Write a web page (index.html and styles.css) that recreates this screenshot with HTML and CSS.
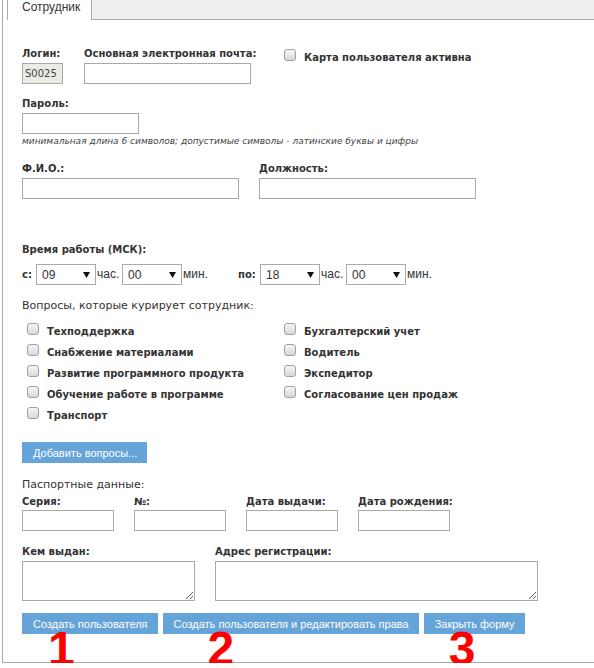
FILE: index.html
```html
<!DOCTYPE html>
<html lang="ru">
<head>
<meta charset="utf-8">
<title>Сотрудник</title>
<link rel="stylesheet" href="styles.css">
</head>
<body>
<div class="wrap">
  <div class="tabs"><div class="tab">Сотрудник</div></div>
  <form class="form">
    <div class="row">
      <div class="field f-login"><label class="lbl">Логин:</label><input class="inp inp-login" value="S0025" disabled></div>
      <div class="field f-email"><label class="lbl">Основная электронная почта:</label><input class="inp inp-email"></div>
      <label class="check"><input type="checkbox" class="cb"><span>Карта пользователя активна</span></label>
    </div>

    <div class="field f-pass"><label class="lbl">Пароль:</label><input class="inp inp-pass" type="password"></div>
    <div class="hint">минимальная длина 6 символов; допустимые символы - латинские буквы и цифры</div>

    <div class="row r-fio">
      <div class="field f-fio"><label class="lbl">Ф.И.О.:</label><input class="inp inp-wide"></div>
      <div class="field"><label class="lbl">Должность:</label><input class="inp inp-wide"></div>
    </div>

    <div class="lbl time-title">Время работы (МСК):</div>
    <div class="time-row">
      <div class="tgroup tg1">
        <span class="lbl tl tl-from">с:</span>
        <span class="sel"><select><option>09</option></select><svg viewBox="0 0 7 6"><path d="M0 0H7L3.5 6Z"/></svg></span>
        <span class="unit u-h">час.</span>
        <span class="sel"><select><option>00</option></select><svg viewBox="0 0 7 6"><path d="M0 0H7L3.5 6Z"/></svg></span>
        <span class="unit u-m">мин.</span>
      </div>
      <div class="tgroup">
        <span class="lbl tl tl-to">по:</span>
        <span class="sel"><select><option>18</option></select><svg viewBox="0 0 7 6"><path d="M0 0H7L3.5 6Z"/></svg></span>
        <span class="unit u-h">час.</span>
        <span class="sel"><select><option>00</option></select><svg viewBox="0 0 7 6"><path d="M0 0H7L3.5 6Z"/></svg></span>
        <span class="unit u-m">мин.</span>
      </div>
    </div>

    <div class="q-title">Вопросы, которые курирует сотрудник:</div>
    <div class="questions">
      <div class="qcol qcol-l">
        <label class="check"><input type="checkbox" class="cb"><span>Техподдержка</span></label>
        <label class="check"><input type="checkbox" class="cb"><span>Снабжение материалами</span></label>
        <label class="check"><input type="checkbox" class="cb"><span>Развитие программного продукта</span></label>
        <label class="check"><input type="checkbox" class="cb"><span>Обучение работе в программе</span></label>
        <label class="check"><input type="checkbox" class="cb"><span>Транспорт</span></label>
      </div>
      <div class="qcol">
        <label class="check"><input type="checkbox" class="cb"><span>Бухгалтерский учет</span></label>
        <label class="check"><input type="checkbox" class="cb"><span>Водитель</span></label>
        <label class="check"><input type="checkbox" class="cb"><span>Экспедитор</span></label>
        <label class="check"><input type="checkbox" class="cb"><span>Согласование цен продаж</span></label>
      </div>
    </div>

    <button type="button" class="btn add">Добавить вопросы...</button>

    <div class="pass-title">Паспортные данные:</div>
    <div class="row pass-row">
      <div class="field f-pp"><label class="lbl">Серия:</label><input class="inp inp-short"></div>
      <div class="field f-pp"><label class="lbl">№:</label><input class="inp inp-short"></div>
      <div class="field f-pp"><label class="lbl">Дата выдачи:</label><input class="inp inp-short"></div>
      <div class="field f-pp"><label class="lbl">Дата рождения:</label><input class="inp inp-short"></div>
    </div>

    <div class="row r-issued">
      <div class="field f-issued"><label class="lbl">Кем выдан:</label><textarea class="ta ta-1"></textarea></div>
      <div class="field"><label class="lbl">Адрес регистрации:</label><textarea class="ta ta-2"></textarea></div>
    </div>

    <div class="actions">
      <div class="act"><button type="button" class="btn">Создать пользователя</button><span class="mark m1">1</span></div>
      <div class="act"><button type="button" class="btn">Создать пользователя и редактировать права</button><span class="mark m2">2</span></div>
      <div class="act"><button type="button" class="btn">Закрыть форму</button><span class="mark m3">3</span></div>
    </div>
  </form>
</div>
</body>
</html>
```

FILE: styles.css
```css
* { box-sizing: border-box; }
html, body { margin: 0; padding: 0; background: #fff; }
body { font-family: "DejaVu Sans", Verdana, sans-serif; color: #333; }

.wrap {
  margin-left: 2px;
  border-left: 1px solid #aaa;
  border-bottom: 1px solid #aaa;
}

.tabs {
  margin-left: 4px;
  height: 20px;
  display: flex;
  align-items: flex-start;
  background: #efefef;
  border-left: 1px solid #aaa;
  border-bottom: 1px solid #aaa;
}
.tab {
  height: 20px;
  padding: 0 11px 0 14px;
  background: #fff;
  border-right: 1px solid #aaa;
  font: 12px/15px "Liberation Sans", Arial, sans-serif;
  color: #333;
}

.form { padding: 27px 0 28px 19px; }

.lbl {
  display: block;
  font: bold 10px/14px "DejaVu Sans", Verdana, sans-serif;
  color: #333;
}

.row { display: flex; align-items: flex-start; }
.field { display: flex; flex-direction: column; gap: 2px; }
.f-login { width: 62px; }
.f-email { width: 200px; }
.f-pass { margin-top: 13px; }
.f-fio { width: 237px; }

.inp {
  display: block;
  height: 21px;
  margin: 0;
  padding: 0 2px;
  border: 1px solid #a9a9a9;
  border-radius: 0;
  background: #fff;
  font: 10px "DejaVu Sans", Verdana, sans-serif;
  color: #444;
  outline: none;
}
.inp-login { width: 41px; background: #ebebe4; }
.inp-email { width: 167px; }
.inp-pass { width: 117px; }
.inp-wide { width: 217px; }
.inp-short { width: 92px; }

.hint {
  margin-top: 1px;
  font: italic 9px/12px "DejaVu Sans", Verdana, sans-serif;
  color: #444;
}

.r-fio { margin-top: 15px; }

.time-title { margin-top: 44px; }
.time-row { margin-top: 7px; display: flex; align-items: center; height: 21px; }
.tgroup { display: flex; align-items: center; }
.tg1 { width: 216px; }
.tl-from { width: 14px; }
.tl-to { width: 22px; }
.sel { position: relative; display: block; width: 60px; height: 21px; }
.sel select {
  -webkit-appearance: none;
  appearance: none;
  display: block;
  width: 100%;
  height: 100%;
  margin: 0;
  padding: 0 0 0 5px;
  border: 1px solid #a9a9a9;
  border-radius: 0;
  background: #fff;
  font: 12px "Liberation Sans", Arial, sans-serif;
  color: #333;
  outline: none;
}
.sel svg {
  position: absolute;
  right: 6px;
  top: 8px;
  width: 7px;
  height: 6px;
  fill: #111;
  pointer-events: none;
}
.unit { font: 12px/21px "Liberation Sans", Arial, sans-serif; color: #333; }
.u-h { width: 26px; padding-left: 1px; }
.u-m { padding-left: 1px; }

.q-title, .pass-title {
  font: 11px/14px "DejaVu Sans", Verdana, sans-serif;
  color: #333;
}
.q-title { margin-top: 14px; }

.questions { margin-top: 8px; display: flex; padding-left: 5px; }
.qcol { display: flex; flex-direction: column; }
.qcol-l { width: 257px; }

.check {
  display: flex;
  align-items: flex-start;
  font: bold 10px/21px "DejaVu Sans", Verdana, sans-serif;
  color: #333;
}
.cb {
  -webkit-appearance: none;
  appearance: none;
  flex: none;
  width: 12px;
  height: 12px;
  margin: 2px 8px 0 0;
  border: 1px solid #a0a0a0;
  border-radius: 3px;
  background: linear-gradient(#f6f6f6, #d8d8d8);
}

.btn {
  display: block;
  height: 21px;
  margin: 0;
  padding: 0 10px 0 11px;
  border: 0;
  border-radius: 0;
  background: #65a4d8;
  color: #fff;
  font: 11px "Liberation Sans", Arial, sans-serif;
  cursor: pointer;
}
.add { margin-top: 16px; }

.pass-title { margin-top: 15px; }
.pass-row { margin-top: 3px; }
.f-pp { width: 112px; gap: 1px; }

.r-issued { margin-top: 14px; }
.f-issued { width: 193px; }
.ta {
  display: block;
  height: 40px;
  margin: 0;
  border: 1px solid #a9a9a9;
  border-radius: 0;
  font: 11px "DejaVu Sans", Verdana, sans-serif;
  outline: none;
}
.ta-1 { width: 173px; }
.ta-2 { width: 323px; }

.actions { margin-top: 12px; display: flex; gap: 5px; }
.act { position: relative; }
.mark {
  position: absolute;
  top: 18px;
  font: bold 48px/36px "Liberation Sans", Arial, sans-serif;
  color: #f00;
}
.m1 { left: 26px; }
.m2 { left: 45px; }
.m3 { left: 25px; }
```
